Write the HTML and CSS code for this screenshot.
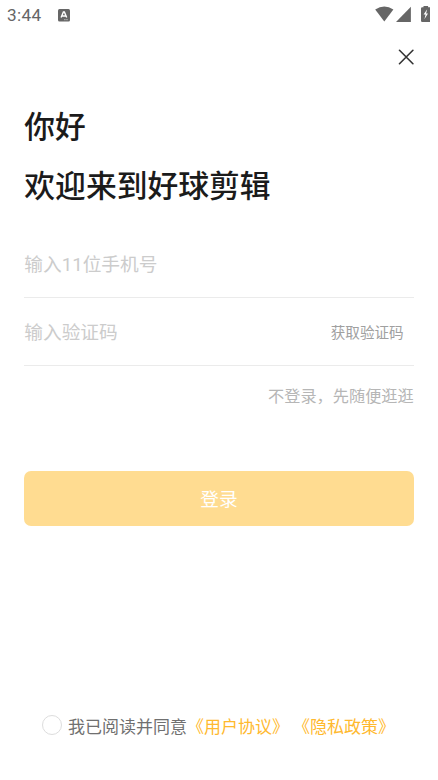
FILE: index.html
```html
<!DOCTYPE html>
<html lang="zh-CN">
<head>
<meta charset="utf-8">
<meta name="viewport" content="width=device-width, initial-scale=1">
<title>登录</title>
<link rel="stylesheet" href="styles.css">
</head>
<body>
<div class="screen">
  <header class="status">
    <div class="status-left">
      <span class="time">3:44</span>
      <svg class="badge" width="12" height="13" viewBox="0 0 12 13"><rect width="12" height="12.6" rx="1.5" fill="#666"/><path d="M3.100 8.600 5.400 3h1L8.700 8.600M4 7h3.800" fill="none" stroke="#fff" stroke-width="1.400"/><path d="M6.300 10.700h1.200M8.400 10.700h1.200" stroke="#ddd" stroke-width=".9"/></svg>
    </div>
    <div class="status-right">
      <svg width="19" height="16" viewBox="0 0 19 16"><path d="M.2 3.500Q9.300-2.700 18.400 3.500L9.300 15.500Z" fill="#666"/></svg>
      <svg class="signal" width="15" height="16" viewBox="0 0 15 16"><path d="M14.900.8V15.900H0Z" fill="#666"/></svg>
      <svg class="battery" width="9" height="17" viewBox="0 0 9 17"><path d="M2.500 0h4.600v1.200H9V16H1.300Q0 16 0 14.700V2.500Q0 1.200 1.300 1.200H2.500Z" fill="#666"/><path d="M6.200 3.300 2.600 8.500h2L3.400 13.200 7 7.500H5.100Z" fill="#fff"/></svg>
    </div>
  </header>
  <div class="close-row">
    <svg width="16" height="16" viewBox="0 0 16 16"><path d="M1.500 1.300 14.900 14.700M14.900 1.300 1.500 14.700" stroke="#333" stroke-width="1.600" stroke-linecap="round"/></svg>
  </div>
  <main class="content">
    <h1 class="title">你好<br>欢迎来到好球剪辑</h1>
    <div class="field"><span class="placeholder">输入11位手机号</span></div>
    <div class="field"><span class="placeholder">输入验证码</span><span class="code">获取验证码</span></div>
    <div class="skip">不登录，先随便逛逛</div>
    <div class="login">登录</div>
  </main>
  <footer class="terms">
    <span class="radio"></span>
    <span class="agree">我已阅读并同意</span><span class="link">《用户协议》</span><span class="link policy">《隐私政策》</span>
  </footer>
</div>
</body>
</html>
```

FILE: styles.css
```css
* {
  box-sizing: border-box;
}

body {
  margin: 0;
  background: #fff;
  font-family: Roboto, "Noto Sans CJK SC", sans-serif;
}

svg {
  display: block;
}

.screen {
  display: flex;
  flex-direction: column;
  width: 438px;
  height: 780px;
  overflow: hidden;
}

.status {
  display: flex;
  justify-content: space-between;
  height: 29px;
  padding: 0 8px 0 7px;
}

.status-left {
  display: flex;
  align-items: flex-start;
}

.time {
  width: 50.500px;
  color: #666;
  font-size: 17.200px;
  font-weight: 400;
  letter-spacing: .3px;
  line-height: 30px;
}

.badge {
  margin-top: 9px;
}

.status-right {
  display: flex;
  align-items: flex-start;
  padding-top: 6px;
}

.signal {
  margin-left: 2px;
}

.battery {
  margin-left: 10px;
}

.close-row {
  display: flex;
  justify-content: flex-end;
  height: 69px;
  padding: 20px 24px 0 0;
}

.content {
  padding: 0 24.300px;
}

.title {
  margin: 0;
  color: #1b1b1b;
  font-size: 30.800px;
  font-weight: 500;
  line-height: 59px;
  white-space: nowrap;
}

.field {
  display: flex;
  align-items: center;
  justify-content: space-between;
  height: 68px;
  border-bottom: 1px solid #ebebeb;
}

.title + .field {
  margin-top: 14px;
}

.placeholder {
  padding-bottom: 2px;
  color: #ccc;
  font-size: 18.700px;
}

.code {
  padding-right: 10px;
  color: #a0a0a0;
  font-size: 14.600px;
}

.skip {
  margin-top: 19px;
  color: #b6b6b6;
  font-size: 16.200px;
  line-height: 24px;
  text-align: right;
}

.login {
  height: 55px;
  margin-top: 62px;
  border-radius: 7px;
  background: #ffdc91;
  color: #fff;
  font-size: 18.700px;
  line-height: 58px;
  text-align: center;
}

.terms {
  display: flex;
  align-items: center;
  height: 30px;
  margin: auto 0 40px;
  padding-left: 42px;
  font-size: 17px;
  line-height: 30px;
  white-space: nowrap;
}

.radio {
  width: 20px;
  height: 20px;
  margin-right: 6px;
  border: 1px solid #ddd;
  border-radius: 50%;
}

.agree,
.link {
  padding-top: 3px;
}

.agree {
  color: #707070;
}

.link {
  color: #ffb92e;
}

.policy {
  margin-left: 4px;
}
```
